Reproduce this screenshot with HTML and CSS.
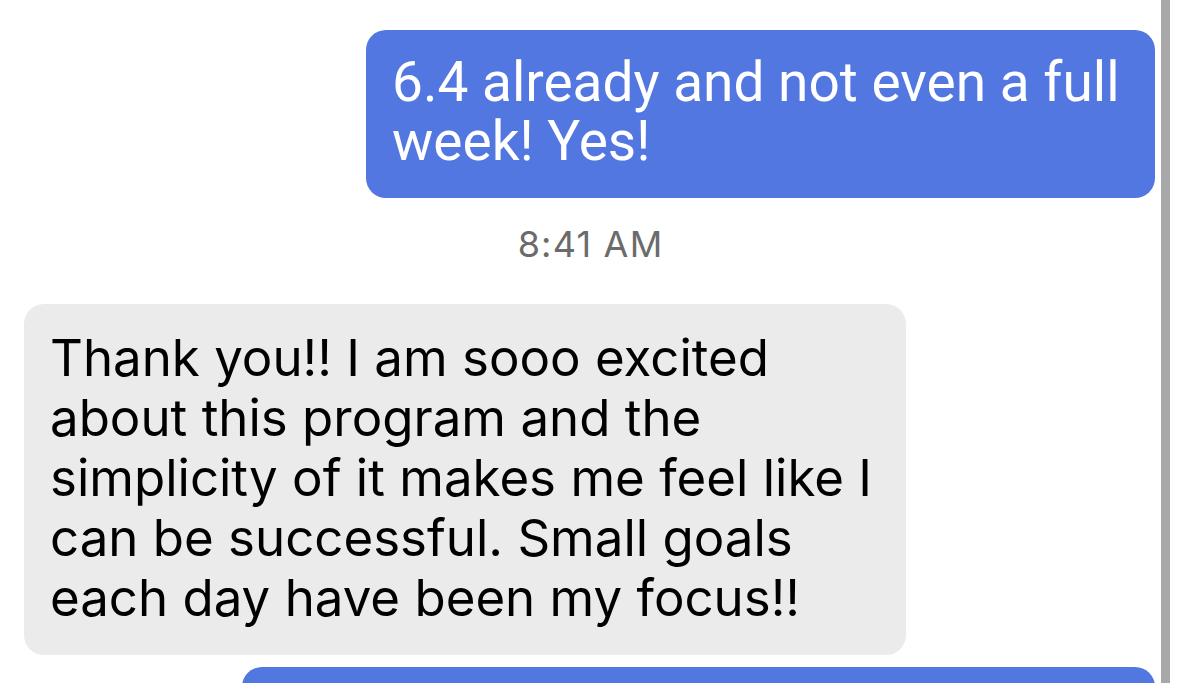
FILE: index.html
```html
<!DOCTYPE html>
<html lang="en">
<head>
    <meta charset="UTF-8">
    <meta name="viewport" content="width=device-width, initial-scale=1.0">
    <title>Messages</title>
    <link rel="stylesheet" href="styles.css">
</head>
<body>
    <!-- Conversation -->
    <div class="thread">
        <div class="bubble sent sent-first">
            6.4 already and not even a full<br>week! Yes!
        </div>

        <p class="timestamp">8:41 AM</p>

        <div class="bubble received">
            Thank you!! I am sooo excited<br>
            about this program and the<br>
            simplicity of it makes me feel like I<br>
            can be successful. Small goals<br>
            each day have been my focus!!
        </div>

        <div class="bubble sent sent-next"></div>
    </div>

    <!-- Scroll indicator -->
    <div class="scroll-bar"></div>
</body>
</html>
```

FILE: styles.css
```css
* {
    margin: 0;
    padding: 0;
    box-sizing: border-box;
}

body {
    height: 100vh;
    background-color: #fff;
    overflow: hidden;
    font-family: Inter, "Noto Sans", sans-serif;
}

/* Conversation */
.thread {
    display: flex;
    flex-direction: column;
    height: 100vh;
    overflow: hidden;
    padding: 30px 24px 0 24px;
}

.bubble {
    flex-shrink: 0;
    border-radius: 20px;
    padding: 0 26px;
}

.sent {
    align-self: flex-end;
    background-color: #5377e0;
    color: #fff;
    font-family: Roboto, "Liberation Sans", sans-serif;
    font-size: 55px;
    line-height: 59px;
}

.sent-first {
    width: 789px;
    padding-top: 23px;
    padding-bottom: 27px;
}

.sent-next {
    width: 913px;
    height: 60px;
    margin-top: 12px;
}

.timestamp {
    text-align: center;
    color: #6b6b6b;
    font-size: 36px;
    line-height: 40px;
    letter-spacing: 1.2px;
    margin: 26px 0 40px 0;
    padding-left: 2px;
}

.received {
    align-self: flex-start;
    width: 882px;
    background-color: #ebebeb;
    color: #000;
    font-size: 51px;
    line-height: 60px;
    padding-top: 24px;
    padding-bottom: 27px;
}

/* Scroll indicator */
.scroll-bar {
    position: fixed;
    top: 0;
    right: 9px;
    width: 9px;
    height: 100%;
    background-color: #a8a8a8;
}
```
